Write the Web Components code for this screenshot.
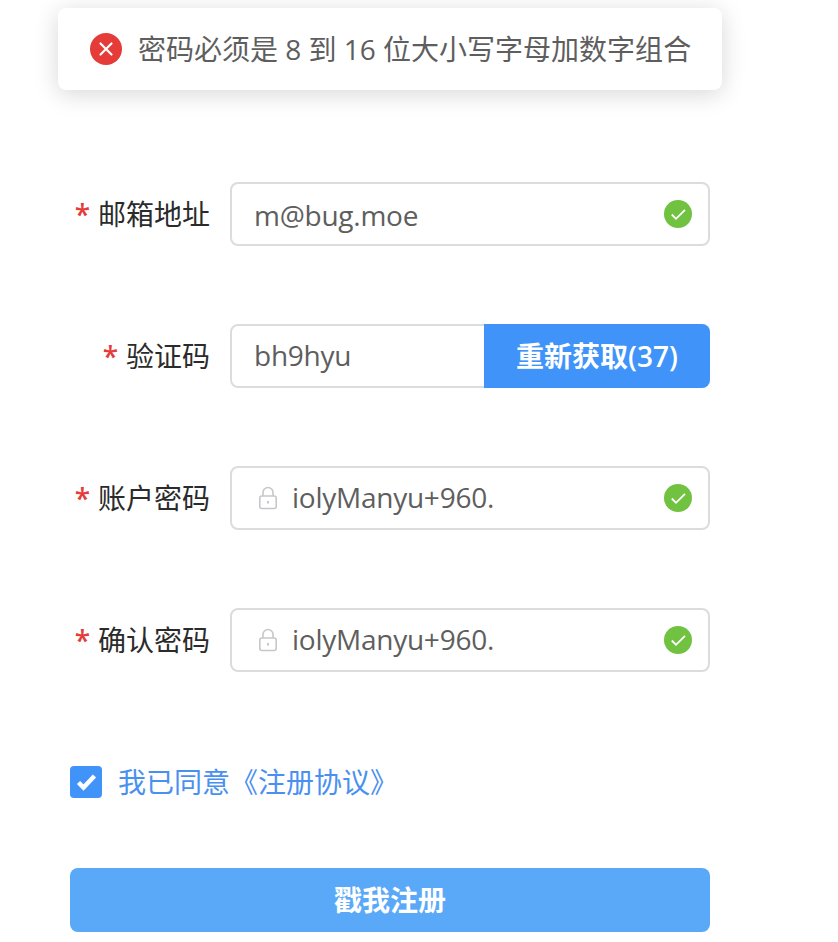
<!DOCTYPE html>
<html lang="zh">
<head>
<meta charset="utf-8">
<title>注册</title>
<style>
  html,body{margin:0;background:#fff}
  body{font-family:"Open Sans","Noto Sans CJK SC",sans-serif;overflow:hidden;height:942px}
</style>
</head>
<body>
<reg-toast>密码必须是 8 到 16 位大小写字母加数字组合</reg-toast>
<reg-form>
  <reg-field label="邮箱地址"><reg-input value="m@bug.moe" low valid></reg-input></reg-field>
  <reg-field label="验证码"><reg-input value="bh9hyu" action="重新获取(37)"></reg-input></reg-field>
  <reg-field label="账户密码"><reg-input value="iolyManyu+960." lock valid></reg-input></reg-field>
  <reg-field label="确认密码"><reg-input value="iolyManyu+960." lock valid></reg-input></reg-field>
  <reg-check>我已同意《注册协议》</reg-check>
  <reg-button>戳我注册</reg-button>
</reg-form>
<script>
(function () {
  const def = (tag, html, attrs) => {
    const tpl = document.createElement("template");
    tpl.innerHTML = html;
    customElements.define(tag, class extends HTMLElement {
      constructor(){
        super();
        this.attachShadow({mode:"open"}).appendChild(tpl.content.cloneNode(true));
      }
      connectedCallback(){ if (attrs) attrs(this, this.shadowRoot); }
    });
  };

  // toast sits over the page, not in the flow
  def("reg-toast", `
    <style>
      :host{position:absolute;left:58px;top:8px;width:664px;height:82px;box-sizing:border-box;
        display:flex;align-items:center;padding-left:32px;background:#fff;border-radius:8px;
        box-shadow:0 4px 24px rgba(0,0,0,.16);color:#5e5e5e;font-size:28px;line-height:36px;white-space:nowrap}
      svg{width:32px;height:32px;margin-right:16px;flex:none}
    </style>
    <svg viewBox="0 0 32 32"><circle cx="16" cy="16" r="16" fill="#e53c3a"/><path d="M10.500 10.500l11 11M21.500 10.500l-11 11" stroke="#fff" stroke-width="2.200" stroke-linecap="round" fill="none"/></svg>
    <slot></slot>`);

  def("reg-form", `
    <style>:host{display:flex;flex-direction:column;width:640px;margin-left:70px;padding-top:182px}</style>
    <slot></slot>`);

  def("reg-field", `
    <style>
      :host{display:flex;align-items:center;height:64px;margin-bottom:78px}
      .lab{width:140px;margin-right:20px;flex:none;text-align:right;font-size:28px;line-height:36px;color:#2b2b2b;white-space:nowrap}
      .star{color:#e53c3a;margin-right:8px;font-weight:600}
      ::slotted(*){flex:1}
    </style>
    <div class="lab"><span class="star">*</span><span id="t"></span></div>
    <slot></slot>`, (el, sr) => { sr.getElementById("t").textContent = el.getAttribute("label"); });

  def("reg-input", `
    <style>
      :host{display:flex;height:64px;box-sizing:border-box;border:2px solid #dcdcdc;border-radius:8px;
        background:#fff;font-size:28px;line-height:36px;color:#5e5e5e;align-items:center;position:relative}
      .lock{width:20px;height:24px;margin-left:26px;margin-right:14px;flex:none;display:none}
      .val{margin-left:22px;flex:1;white-space:nowrap;letter-spacing:-.25px;padding-bottom:2px}
      .ok{width:28px;height:28px;margin-right:16px;flex:none;display:none}
      .act{position:absolute;right:-2px;top:-2px;bottom:-2px;width:226px;display:none;align-items:center;justify-content:center;
        background:#4094f9;color:#fff;font-weight:600;border-radius:0 8px 8px 0}
      :host([lock]) .lock{display:block}
      :host([lock]) .val{margin-left:0}
      :host([low]) .val{padding-bottom:0;padding-top:2px}
      :host([valid]) .ok{display:block}
    </style>
    <svg class="lock" viewBox="0 0 20 24" fill="none" stroke="#c6c7ca" stroke-width="1.600"><path d="M5 10V6.500a5 5 0 0 1 10 0V10"/><rect x="1.800" y="10" width="16.400" height="12.500" rx="2"/><path d="M10 15v2.500" stroke-width="2"/></svg>
    <span class="val" id="v"></span>
    <svg class="ok" viewBox="0 0 28 28"><circle cx="14" cy="14" r="14" fill="#71c240"/><path d="M7.800 14.500l4.200 4.300 9-9" stroke="#fff" stroke-width="1.800" fill="none"/></svg>
    <span class="act" id="a"></span>`, (el, sr) => {
      sr.getElementById("v").textContent = el.getAttribute("value");
      const a = el.getAttribute("action");
      if (a){ const n = sr.getElementById("a"); n.textContent = a; n.style.display = "flex"; }
    });

  def("reg-check", `
    <style>
      :host{display:flex;align-items:center;height:32px;margin-top:16px;color:#4a90f0;font-size:28px;line-height:36px;white-space:nowrap}
      svg{width:32px;height:32px;margin-right:16px;flex:none}
    </style>
    <svg viewBox="0 0 32 32"><rect width="32" height="32" rx="4" fill="#4094f9"/><path d="M8.500 16.500l5 5 11-11.500" stroke="#fff" stroke-width="4.500" fill="none"/></svg>
    <slot></slot>`);

  def("reg-button", `
    <style>
      :host{display:flex;align-items:center;justify-content:center;height:64px;margin-top:70px;background:#5aa9f9;
        border-radius:8px;color:#fff;font-size:28px;line-height:36px;font-weight:600}
    </style>
    <slot></slot>`);
})();
</script>
</body>
</html>
